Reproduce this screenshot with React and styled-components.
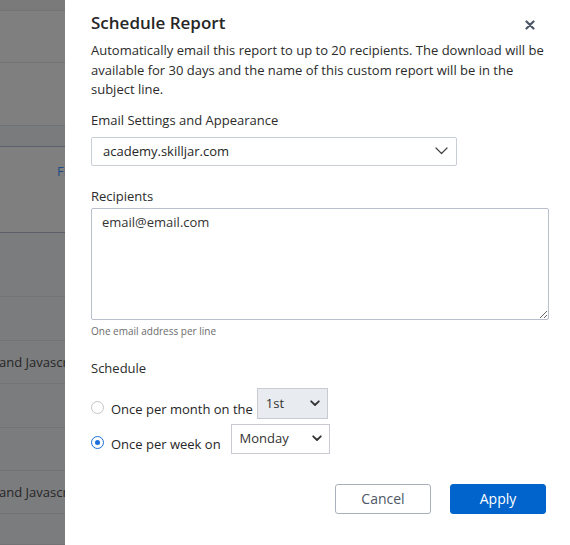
import styled, { createGlobalStyle } from 'styled-components';

const GlobalStyle = createGlobalStyle`
  html, body {
    margin: 0;
    padding: 0;
    background: #ffffff;
  }
  body {
    font-family: 'Open Sans', 'Noto Sans', sans-serif;
    color: #2b2b2b;
  }
  * {
    box-sizing: border-box;
  }
`;

// rows of the report table behind the overlay
const backdropRows = [
  { height: 11, tone: 'top' },
  { height: 52 },
  { height: 63 },
  { height: 21, tone: 'band', dark: true },
  { height: 86, link: 'Filter', dark: true },
  { height: 64, tone: 'low' },
  { height: 44, tone: 'low' },
  { height: 43, tone: 'low', text: 'and Javascript' },
  { height: 44, tone: 'low' },
  { height: 43, tone: 'low' },
  { height: 43, tone: 'low', text: 'and Javascript' },
  { height: 31, tone: 'low' },
];

const tones = {
  top: '#7a7a7a',
  band: '#7a7b7d',
  low: '#7b7c7e',
};

function Chevron({ bold }) {
  return bold ? (
    <svg width='10' height='7' viewBox='0 0 10 7'>
      <path d='M1.2 1.3 L5 5 L8.8 1.3' fill='none' stroke='#333' strokeWidth='1.8' strokeLinecap='round' strokeLinejoin='round' />
    </svg>
  ) : (
    <svg width='13' height='8' viewBox='0 0 13 8'>
      <path d='M1 1 L6.5 6.5 L12 1' fill='none' stroke='#444' strokeWidth='1.2' strokeLinecap='round' strokeLinejoin='round' />
    </svg>
  );
}

export default function App() {
  return (
    <>
      <GlobalStyle />
      <Page>
        <Backdrop>
          {backdropRows.map((row, i) => (
            <BackdropRow key={i} $height={row.height} $tone={row.tone} $dark={row.dark} $top={!!row.link}>
              {row.text && <RowText>{row.text}</RowText>}
              {row.link && <RowLink>{row.link}</RowLink>}
            </BackdropRow>
          ))}
        </Backdrop>

        <Panel>
          <Header>
            <Title>Schedule Report</Title>
            <CloseButton type='button' aria-label='Close'>
              <svg width='10' height='10' viewBox='0 0 10 10'>
                <path d='M1.5 1.5 L8.5 8.5 M8.5 1.5 L1.5 8.5' stroke='#4d5766' strokeWidth='2.2' strokeLinecap='round' />
              </svg>
            </CloseButton>
          </Header>

          <Description>
            Automatically email this report to up to 20 recipients. The download will be available for 30 days
            and the name of this custom report will be in the subject line.
          </Description>

          <Field $top={11}>
            <Label>Email Settings and Appearance</Label>
            <SelectBox $width={366} $height={29}>
              <SelectText>academy.skilljar.com</SelectText>
              <Chevron />
            </SelectBox>
          </Field>

          <Field $top={21}>
            <Label $gap={3}>Recipients</Label>
            <Recipients defaultValue='email@email.com' />
            <Help>One email address per line</Help>
          </Field>

          <Field $top={21}>
            <Label>Schedule</Label>
            <Options>
              <OptionRow>
                <Radio />
                <OptionText>Once per month on the</OptionText>
                <SmallSelect $width={71} $disabled>
                  <span>1st</span>
                  <Chevron bold />
                </SmallSelect>
              </OptionRow>
              <OptionRow>
                <Radio $checked />
                <OptionText>Once per week on</OptionText>
                <SmallSelect $width={99} $offset={6}>
                  <span>Monday</span>
                  <Chevron bold />
                </SmallSelect>
              </OptionRow>
            </Options>
          </Field>

          <Footer>
            <Button type='button'>Cancel</Button>
            <Button type='button' $primary>
              Apply
            </Button>
          </Footer>
        </Panel>
      </Page>
    </>
  );
}

const Page = styled.div`
  display: flex;
  width: 570px;
  height: 545px;
  overflow: hidden;
`;

const Backdrop = styled.div`
  width: 65px;
  flex-shrink: 0;
  display: flex;
  flex-direction: column;
  background: #7f7f7f;
  overflow: hidden;
`;

const BackdropRow = styled.div`
  height: ${(p) => p.$height}px;
  flex-shrink: 0;
  display: flex;
  align-items: ${(p) => (p.$top ? 'flex-start' : 'center')};
  padding-top: ${(p) => (p.$top ? 15 : 0)}px;
  background: ${(p) => tones[p.$tone] || 'transparent'};
  border-bottom: 1px solid ${(p) => (p.$dark ? '#5b606c' : '#727375')};
  white-space: nowrap;
  font-size: 13px;
`;

const RowText = styled.span`
  color: #262626;
  margin-left: -1px;
`;

const RowLink = styled.span`
  color: #1b4a86;
  margin-left: 57px;
`;

const Panel = styled.div`
  flex: 1;
  min-width: 0;
  background: #ffffff;
  padding: 11px 21px 0 26px;
  display: flex;
  flex-direction: column;
`;

const Header = styled.div`
  display: flex;
  align-items: center;
  justify-content: space-between;
  height: 24px;
`;

const Title = styled.h2`
  margin: 0;
  font-size: 17px;
  font-weight: 600;
  color: #262626;
  line-height: 24px;
`;

const CloseButton = styled.button`
  border: 0;
  background: none;
  padding: 0;
  margin: 4px 14px 0 0;
  display: flex;
  cursor: pointer;
`;

const Description = styled.p`
  margin: 6px 0 0;
  font-size: 13px;
  line-height: 19.5px;
  color: #2b2b2b;
`;

const Field = styled.div`
  display: flex;
  flex-direction: column;
  margin-top: ${(p) => p.$top}px;
`;

const Label = styled.div`
  font-size: 13px;
  line-height: 18px;
  color: #2b2b2b;
  margin-bottom: ${(p) => (p.$gap !== undefined ? p.$gap : 8)}px;
`;

const SelectBox = styled.div`
  width: ${(p) => p.$width}px;
  height: ${(p) => p.$height}px;
  border: 1px solid #c9ced6;
  border-radius: 2px;
  display: flex;
  align-items: center;
  justify-content: space-between;
  padding: 0 8px 0 11px;
  background: #ffffff;
`;

const SelectText = styled.span`
  font-size: 13px;
  color: #262626;
`;

const Recipients = styled.textarea`
  width: 458px;
  height: 112px;
  border: 1px solid #b9c0cb;
  border-radius: 2px;
  padding: 4px 10px;
  font-family: inherit;
  font-size: 13px;
  line-height: 18px;
  color: #333;
  resize: both;
  outline: none;
  display: block;
`;

const Help = styled.div`
  font-size: 10px;
  color: #6b6b6b;
  margin-top: 4px;
`;

const Options = styled.div`
  display: flex;
  flex-direction: column;
  gap: 5px;
  margin-top: 4px;
`;

const OptionRow = styled.div`
  display: flex;
  align-items: center;
  height: 30px;
`;

const Radio = styled.span`
  width: 13px;
  height: 13px;
  border-radius: 50%;
  border: 1px solid ${(p) => (p.$checked ? '#1a6fdb' : '#c4c4c4')};
  background: #ffffff;
  display: flex;
  align-items: center;
  justify-content: center;
  margin-top: 8px;
  margin-right: 7px;

  &::after {
    content: '';
    width: 5px;
    height: 5px;
    border-radius: 50%;
    background: ${(p) => (p.$checked ? '#1a6fdb' : 'transparent')};
  }
`;

const OptionText = styled.span`
  font-size: 13px;
  color: #262626;
  margin-top: 10px;
  margin-right: 4px;
`;

const SmallSelect = styled.div`
  width: ${(p) => p.$width}px;
  height: ${(p) => (p.$disabled ? 31 : 30)}px;
  margin-left: ${(p) => p.$offset || 0}px;
  border: 1px solid #c8ccd2;
  background: ${(p) => (p.$disabled ? '#e8ebef' : '#ffffff')};
  display: flex;
  align-items: center;
  justify-content: space-between;
  padding: 0 7px 0 8px;
  font-size: 13px;
  color: #333;

  span {
    margin-top: -2px;
  }
`;

const Footer = styled.div`
  display: flex;
  justify-content: flex-end;
  gap: 19px;
  margin-top: 30px;
  margin-right: 3px;
`;

const Button = styled.button`
  width: 96px;
  height: 30px;
  border-radius: 3px;
  font-family: inherit;
  font-size: 14px;
  cursor: pointer;
  border: 1px solid ${(p) => (p.$primary ? '#0064cc' : '#a9b0bb')};
  background: ${(p) => (p.$primary ? '#0064cc' : '#ffffff')};
  color: ${(p) => (p.$primary ? '#ffffff' : '#4e5766')};
`;
